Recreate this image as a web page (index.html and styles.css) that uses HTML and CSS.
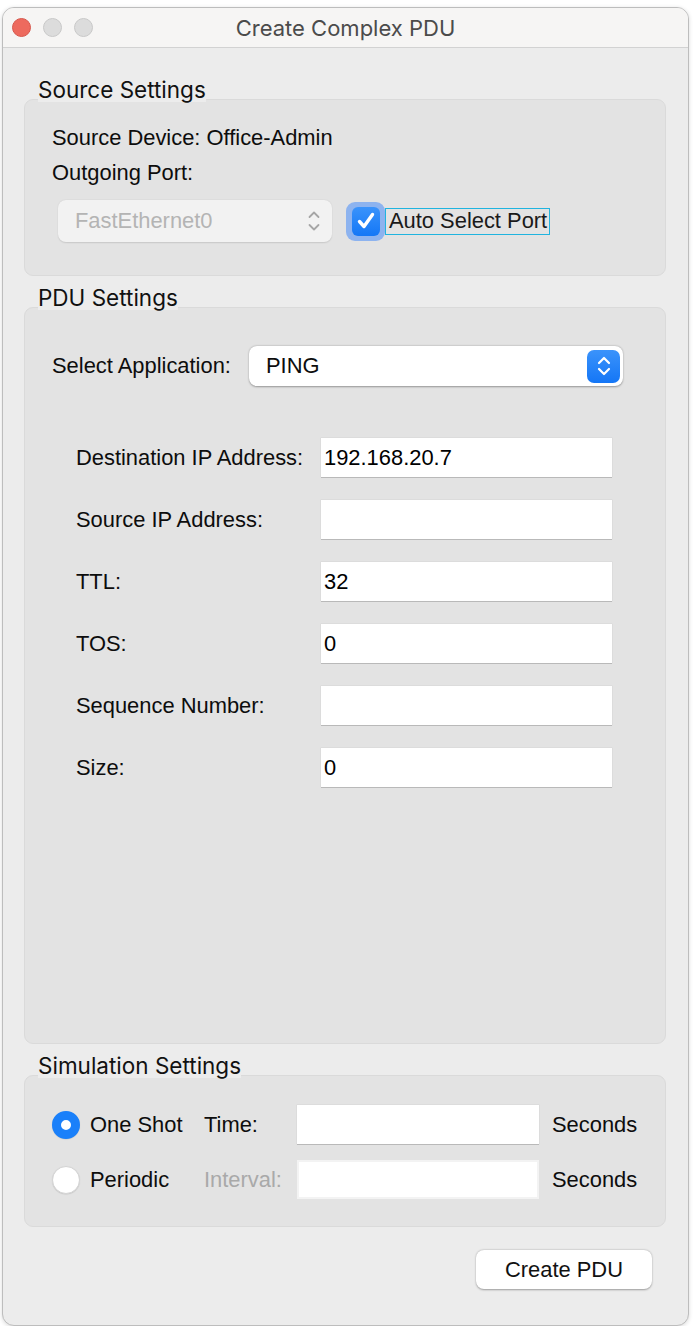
FILE: index.html
```html
<!DOCTYPE html>
<html lang="en">
<head>
    <meta charset="UTF-8" />
    <meta name="viewport" content="width=device-width, initial-scale=1" />
    <title>Create Complex PDU</title>
    <link rel="stylesheet" href="styles.css">
</head>
<body>

<div class="window">
    <!-- title bar with the traffic lights -->
    <div class="titlebar">
        <div class="lights">
            <span class="light close"></span>
            <span class="light"></span>
            <span class="light"></span>
        </div>
        <div class="title">Create Complex PDU</div>
        <div></div>
    </div>

    <div class="content">
        <!-- Source Settings -->
        <div class="group-title">Source Settings</div>
        <div class="group source">
            <div class="line">Source Device: Office-Admin</div>
            <div class="line">Outgoing Port:</div>
            <div class="port-row">
                <div class="combo combo-disabled">
                    <span>FastEthernet0</span>
                    <svg class="arrows" width="12" height="22" viewBox="0 0 12 22">
                        <path d="M1.5 7 L6 2.5 L10.5 7 M1.5 15 L6 19.5 L10.5 15" fill="none" stroke="#a6a6a6" stroke-width="1.8" stroke-linecap="round" stroke-linejoin="round"/>
                    </svg>
                </div>
                <div class="check-ring">
                    <span class="check-box">
                        <svg width="22" height="22" viewBox="0 0 22 22">
                            <path d="M4.5 11.5 L9 16.5 L17.5 4.5" fill="none" stroke="#fff" stroke-width="3.4" stroke-linecap="round" stroke-linejoin="round"/>
                        </svg>
                    </span>
                </div>
                <div class="check-label">Auto Select Port</div>
            </div>
        </div>

        <!-- PDU Settings -->
        <div class="group-title">PDU Settings</div>
        <div class="group pdu">
            <div class="app-row">
                <div class="app-label">Select Application:</div>
                <div class="combo combo-app">
                    <span>PING</span>
                    <span class="arrow-box">
                        <svg width="16" height="24" viewBox="0 0 16 24">
                            <path d="M3 9 L8 4 L13 9 M3 15 L8 20 L13 15" fill="none" stroke="#fff" stroke-width="2.2" stroke-linecap="round" stroke-linejoin="round"/>
                        </svg>
                    </span>
                </div>
            </div>

            <div class="fields">
                <div class="field"><label>Destination IP Address:</label><div class="input">192.168.20.7</div></div>
                <div class="field"><label>Source IP Address:</label><div class="input"></div></div>
                <div class="field"><label>TTL:</label><div class="input">32</div></div>
                <div class="field"><label>TOS:</label><div class="input">0</div></div>
                <div class="field"><label>Sequence Number:</label><div class="input"></div></div>
                <div class="field"><label>Size:</label><div class="input">0</div></div>
            </div>
        </div>

        <!-- Simulation Settings -->
        <div class="group-title">Simulation Settings</div>
        <div class="group sim">
            <div class="sim-grid">
                <div class="radio-opt"><span class="radio on"></span>One Shot</div>
                <div>Time:</div>
                <div class="input"></div>
                <div>Seconds</div>

                <div class="radio-opt"><span class="radio"></span>Periodic</div>
                <div class="dim">Interval:</div>
                <div class="input input-disabled"></div>
                <div>Seconds</div>
            </div>
        </div>

        <div class="actions">
            <button class="btn">Create PDU</button>
        </div>
    </div>
</div>

</body>
</html>
```

FILE: styles.css
```css
body {
    margin: 0;
    background: #fff;
    font-family: "Liberation Sans", Arial, sans-serif;
    font-size: 21.9px;
    color: #0d0d0d;
}

.window {
    box-sizing: border-box;
    width: 687px;
    height: 1319px;
    margin: 7px 0 0 2px;
    background: #ececec;
    border: 1px solid #bdbdbd;
    border-radius: 12px;
    overflow: hidden;
    box-shadow: 0 1px 4px rgba(0,0,0,0.15);
}

/* title bar */
.titlebar {
    height: 39px;
    display: grid;
    grid-template-columns: 1fr auto 1fr;
    align-items: center;
    background: #f6f5f4;
    border-bottom: 1px solid #d2d2d2;
}
.lights {
    display: flex;
    gap: 12px;
    padding-left: 9px;
}
.light {
    width: 17px;
    height: 17px;
    border-radius: 50%;
    background: #dcdcdc;
    border: 0.5px solid #c8c8c8;
}
.light.close {
    background: #ed6a5e;
    border-color: #d6574c;
}
.title {
    font-family: Inter, "Open Sans", sans-serif;
    font-size: 22px;
    color: #4b4b4b;
}

.content {
    padding: 30px 22px 0 21px;
}

/* group boxes */
.group-title {
    position: relative;
    z-index: 1;
    width: fit-content;
    margin: 0 0 -3px 14px;
    background: #ececec;
    font-family: Inter, "Open Sans", sans-serif;
    font-size: 22.5px;
    line-height: 24px;
    color: #111;
}
.group {
    box-sizing: border-box;
    background: #e3e3e3;
    border: 1px solid #dadada;
    border-radius: 9px;
    margin-bottom: 10px;
}

.source {
    height: 177px;
    padding: 26px 27px 0 27px;
}
.line {
    line-height: 24px;
    margin-bottom: 11px;
}
.port-row {
    display: flex;
    align-items: center;
    margin-top: 15px;
    height: 42px;
}
.combo {
    box-sizing: border-box;
    display: flex;
    align-items: center;
    justify-content: space-between;
    border-radius: 8px;
}
.combo-disabled {
    width: 274px;
    height: 42px;
    margin-left: 6px;
    padding: 0 12px 0 17px;
    background: #f2f2f2;
    color: #b4b4b4;
    box-shadow: 0 0.5px 1.5px rgba(0,0,0,0.12);
}
.check-ring {
    box-sizing: border-box;
    width: 39px;
    height: 39px;
    margin-left: 14px;
    border-radius: 9px;
    background: #8db3ef;
    display: flex;
    align-items: center;
    justify-content: center;
}
.check-box {
    width: 28px;
    height: 29px;
    border-radius: 6px;
    background: linear-gradient(#3a93fb, #1477f6);
    display: flex;
    align-items: center;
    justify-content: center;
}
.check-label {
    box-sizing: border-box;
    height: 27px;
    padding: 0 2px 0 3px;
    border: 1.5px solid #21b4df;
    line-height: 24px;
    color: #1a1a1a;
}

.pdu {
    height: 737px;
    padding: 38px 0 0 27px;
}
.app-row {
    display: flex;
    align-items: center;
}
.app-label {
    width: 197px;
    flex-shrink: 0;
}
.combo-app {
    width: 374px;
    height: 40px;
    padding: 0 3px 0 17px;
    background: #fff;
    box-shadow: 0 0.5px 2px rgba(0,0,0,0.35);
}
.arrow-box {
    width: 33px;
    height: 33px;
    border-radius: 7px;
    background: linear-gradient(#3b93fb, #1476f6);
    display: flex;
    align-items: center;
    justify-content: center;
}

.fields {
    margin-top: 52px;
    padding-left: 24px;
    display: flex;
    flex-direction: column;
    gap: 23px;
}
.field {
    display: flex;
    align-items: center;
}
.field label {
    width: 245px;
    flex-shrink: 0;
}
.input {
    box-sizing: border-box;
    width: 291px;
    height: 39px;
    padding-left: 3px;
    line-height: 39px;
    background: #fff;
    box-shadow: 0 1px 0 #b9b9b9, 0 0 0 0.5px #d6d6d6;
    color: #000;
}

.sim {
    height: 152px;
    padding: 29px 0 0 27px;
}
.sim-grid {
    display: grid;
    grid-template-columns: 152px 93px 242px auto;
    grid-auto-rows: 39px;
    row-gap: 16px;
    align-items: center;
}
.sim-grid .input {
    width: 242px;
}
.sim-grid > div:nth-child(4n) {
    padding-left: 13px;
}
.input-disabled {
    border: 2px solid #f3f3f3;
    box-shadow: none;
}
.dim {
    color: #a9a9a9;
}
.radio-opt {
    display: flex;
    align-items: center;
    gap: 10px;
}
.radio {
    box-sizing: border-box;
    width: 28px;
    height: 28px;
    border-radius: 50%;
    background: #fff;
    border: 1px solid #d4d4d4;
    box-shadow: 0 0.5px 1px rgba(0,0,0,0.12);
}
.radio.on {
    border: 9px solid #1a80fa;
    background: #fff;
}

.actions {
    display: flex;
    justify-content: flex-end;
    padding: 13px 14px 0 0;
}
.btn {
    width: 176px;
    height: 39px;
    border: none;
    border-radius: 8px;
    background: #fff;
    box-shadow: 0 0.5px 2px rgba(0,0,0,0.35);
    font-family: "Liberation Sans", Arial, sans-serif;
    font-size: 21.9px;
    color: #111;
}
```
